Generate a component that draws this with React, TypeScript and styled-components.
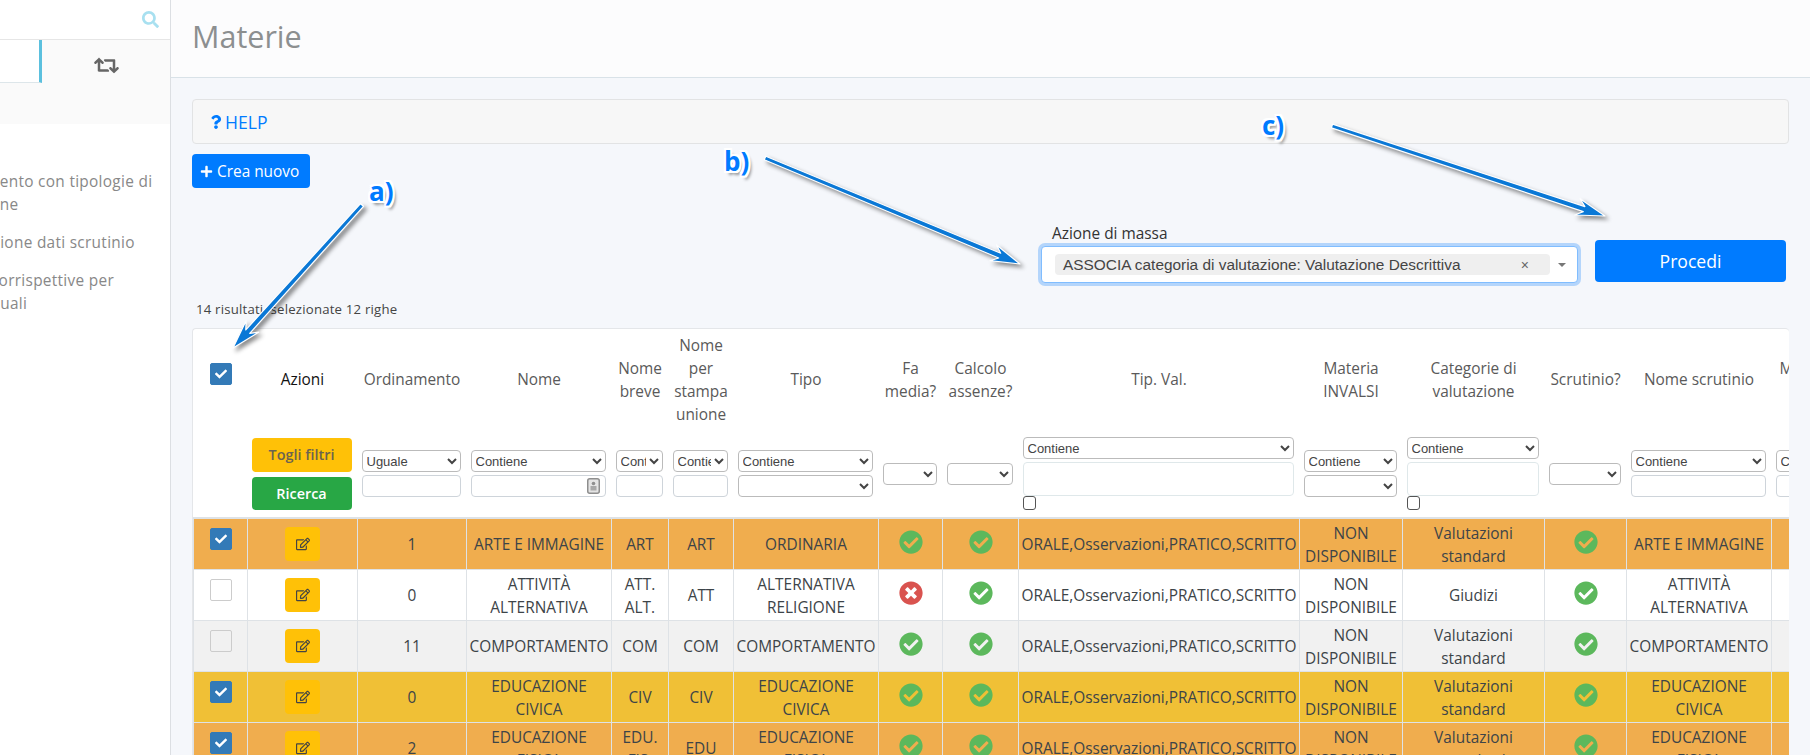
import React from 'react'
import styled, { createGlobalStyle } from 'styled-components'
import {
  FaCheck,
  FaCheckCircle,
  FaPlus,
  FaQuestion,
  FaRegEdit,
  FaRetweet,
  FaSearch,
  FaTimesCircle,
} from 'react-icons/fa'

const GlobalStyle = createGlobalStyle`
  html, body {
    margin: 0;
    padding: 0;
    background: #f5f7fb;
    font-family: "Open Sans", "Liberation Sans", sans-serif;
    font-size: 15.4px;
    color: #444;
  }
  * { box-sizing: border-box; }
`

const Page = styled.div`
  position: relative;
  display: flex;
  width: 1810px;
  height: 755px;
  overflow: hidden;
`

/* sidebar, scrolled off to the left in the reference */
const Sidebar = styled.aside`
  flex: 0 0 171px;
  background: #fff;
  border-right: 1px solid #dcdfe3;
  overflow: hidden;
`

const SearchRow = styled.div`
  height: 40px;
  padding: 0 11px 0 0;
  display: flex;
  align-items: center;
  justify-content: flex-end;
  border-bottom: 1px solid #e6e6e6;
  color: #a8e0f0;
  font-size: 17px;
`

const TabRow = styled.div`
  display: flex;
  height: 84px;
  background: #fafafa;
  align-items: flex-start;
`

const ActiveTab = styled.div`
  width: 42px;
  height: 43px;
  background: #fff;
  border-right: 3px solid #5bc0de;
  border-bottom: 1px solid #dde6ea;
`

const SwapTab = styled.div`
  flex: 1;
  height: 43px;
  display: flex;
  align-items: center;
  justify-content: center;
  color: #666;
  font-size: 25px;
  padding-top: 7px;
`

const Menu = styled.ul`
  list-style: none;
  margin: 46px 0 0 -67px;
  padding: 0;
  width: 260px;
`

const MenuItem = styled.li`
  font-size: 15.4px;
  line-height: 23px;
  letter-spacing: 0.3px;
  color: #888;
  margin-bottom: 15px;
`

const Main = styled.main`
  flex: 1;
  min-width: 0;
  background: #f5f7fb;
`

const Header = styled.header`
  height: 78px;
  padding: 0 0 6px 21px;
  display: flex;
  align-items: center;
  background: #fcfcfd;
  border-bottom: 1px solid #d9e2e8;
`

const Title = styled.h1`
  margin: 0;
  font-size: 30.5px;
  font-weight: 400;
  color: #8c8f90;
`

const Content = styled.div`
  padding: 21px 21px 0;
`

const HelpBar = styled.div`
  height: 45px;
  display: flex;
  align-items: center;
  gap: 2px;
  padding-left: 16px;
  background: #f7f7f7;
  border: 1px solid #e2e3e4;
  border-radius: 4px;
  color: #007bff;
  font-size: 17.6px;
`

const CreateButton = styled.button`
  display: flex;
  align-items: center;
  gap: 4px;
  height: 34px;
  width: 118px;
  margin-top: 10px;
  padding: 0 0 0 8px;
  border: 0;
  border-radius: 4px;
  background: #007bff;
  color: #fff;
  font: 400 15.4px "Open Sans", sans-serif;
`

const MassRow = styled.div`
  display: flex;
  justify-content: flex-end;
  align-items: flex-end;
  gap: 17px;
  margin-top: 36px;
  padding-right: 3px;
`

const MassField = styled.div`
  width: 537px;
`

const MassLabel = styled.div`
  height: 22px;
  line-height: 20px;
  padding-left: 11px;
  font-size: 15.4px;
  color: #333;
`

const MassSelect = styled.div`
  height: 37px;
  display: flex;
  align-items: center;
  padding: 0 0 0 13px;
  background: #fff;
  border: 1px solid #80bdff;
  border-radius: 4px;
  box-shadow: 0 0 0 3px #b4d5fb;
  font: 15.4px "Liberation Sans", Arial, sans-serif;
  color: #444;
`

const Chip = styled.span`
  width: 495px;
  height: 21px;
  display: flex;
  align-items: center;
  justify-content: space-between;
  padding: 0 21px 0 8px;
  background: #efefef;
  border-radius: 4px;
`

const ChipClose = styled.span`
  color: #666;
  font-size: 14px;
`

const Caret = styled.span`
  width: 0;
  height: 0;
  margin-left: 8px;
  border-left: 4px solid transparent;
  border-right: 4px solid transparent;
  border-top: 4px solid #777;
`

const GoButton = styled.button`
  width: 191px;
  height: 42px;
  margin-bottom: 1px;
  border: 0;
  border-radius: 4px;
  background: #007bff;
  color: #fff;
  font: 400 17.6px "Open Sans", sans-serif;
`

const Count = styled.div`
  margin: 18px 0 0 4px;
  height: 16px;
  line-height: 16px;
  font-size: 13.2px;
  letter-spacing: 0.2px;
  color: #444;
`

const Card = styled.div`
  margin-top: 11px;
  height: 500px;
  background: #fff;
  border: 1px solid #e4e6e9;
  border-radius: 4px 4px 0 0;
  border-right-width: 0;
  overflow: hidden;
`

const Grid = styled.table`
  table-layout: fixed;
  border-collapse: collapse;
  width: 1724px;
  font-size: 15.4px;
  line-height: 23px;
`

const HeadRow = styled.tr`
  height: 101px;
`

const Th = styled.th<{ $strong?: boolean }>`
  padding: 0 5px;
  font-weight: 500;
  text-align: center;
  vertical-align: middle;
  color: ${(p) => (p.$strong ? '#111' : '#5a5a5a')};
`

const FilterRow = styled.tr`
  height: 88px;
  border-bottom: 2px solid #dee2e6;
`

const FilterCell = styled.td`
  padding: 0 6px 0 4px;
  vertical-align: middle;
`

const Stack = styled.div<{ $gap?: number }>`
  display: flex;
  flex-direction: column;
  gap: ${(p) => p.$gap ?? 3}px;
`

const FilterButton = styled.button<{ $bg: string; $fg: string; $h: number }>`
  height: ${(p) => p.$h}px;
  border: 0;
  border-radius: 4px;
  background: ${(p) => p.$bg};
  color: ${(p) => p.$fg};
  font: 600 14.4px "Open Sans", sans-serif;
`

const FilterSelect = styled.select`
  display: block;
  width: 100%;
  height: 22px;
  padding: 0;
  background: #fff;
  border: 1px solid #bbb;
  border-radius: 4px;
  font: 13px "Liberation Sans", Arial, sans-serif;
  color: #444;
`

const InputBox = styled.div`
  position: relative;
`

const FilterInput = styled.input`
  display: block;
  width: 100%;
  height: 22px;
  padding: 0 3px;
  background: #fff;
  border: 1px solid #ced4da;
  border-radius: 4px;
`

const KeyIcon = styled.svg`
  position: absolute;
  top: 3px;
  right: 6px;
  width: 13px;
  height: 16px;
`

const MultiBox = styled.div`
  height: 34px;
  background: #fff;
  border: 1px solid #dfe8ea;
  border-radius: 4px;
`

const TinyCheck = styled.input`
  appearance: none;
  display: block;
  width: 13px;
  height: 14px;
  margin: -3px 0 0;
  background: #fff;
  border: 1px solid #555;
  border-radius: 3px;
`

const Row = styled.tr<{ $bg: string }>`
  height: 51px;
  background: ${(p) => p.$bg};
`

const Td = styled.td`
  padding: 2px 1px 0;
  border: 1px solid #dee2e6;
  text-align: center;
  vertical-align: middle;
  color: #3d4448;
`

const Box = styled.span<{ $checked?: boolean }>`
  display: flex;
  align-items: center;
  justify-content: center;
  width: 22px;
  height: 22px;
  margin: 0 auto 11px;
  border-radius: 2px;
  border: 1px solid ${(p) => (p.$checked ? '#337ab7' : '#ccc')};
  background: ${(p) => (p.$checked ? '#337ab7' : 'transparent')};
  color: #fff;
  font-size: 12px;
`

const EditButton = styled.span`
  display: flex;
  align-items: center;
  justify-content: center;
  width: 35px;
  height: 34px;
  margin: 0 auto 2px;
  border-radius: 4px;
  background: #ffc107;
  color: #444;
  font-size: 14px;
`

const Status = styled.span<{ $ok: boolean }>`
  display: flex;
  justify-content: center;
  padding-bottom: 5px;
  color: ${(p) => (p.$ok ? '#5cb85c' : '#d9534f')};
  font-size: 24px;
`

const Overlay = styled.svg`
  position: absolute;
  inset: 0;
  width: 1810px;
  height: 755px;
  pointer-events: none;
  filter: drop-shadow(3px 3px 2px rgba(0, 0, 0, 0.45));
`

const Mark = styled.span<{ $x: number; $y: number }>`
  position: absolute;
  left: ${(p) => p.$x}px;
  top: ${(p) => p.$y}px;
  font: 700 26px/30px "Open Sans", sans-serif;
  color: #007bff;
  text-shadow:
    2px 0 0 #fff, -2px 0 0 #fff, 0 2px 0 #fff, 0 -2px 0 #fff,
    2px 2px 0 #fff, -2px 2px 0 #fff, 2px -2px 0 #fff, -2px -2px 0 #fff,
    3px 4px 3px rgba(0, 0, 0, 0.4);
`

const colWidths = [54, 110, 109, 145, 57, 65, 145, 64, 76, 281, 103, 142, 82, 145, 146]

const heads = [
  '', 'Azioni', 'Ordinamento', 'Nome', 'Nome breve', 'Nome per stampa unione', 'Tipo', 'Fa media?',
  'Calcolo assenze?', 'Tip. Val.', 'Materia INVALSI', 'Categorie di valutazione', 'Scrutinio?',
  'Nome scrutinio', 'Materia principale del docente',
]

const TIP_VAL = 'ORALE,Osservazioni,PRATICO,SCRITTO'
const ORANGE = '#f0ad4e'
const YELLOW = '#f0c036'

type Subject = {
  bg: string
  checked: boolean
  order: string
  name: string
  short: string
  merge: string
  type: string
  media: boolean
  cat: string
}

const subjects: Subject[] = [
  { bg: ORANGE, checked: true, order: '1', name: 'ARTE E IMMAGINE', short: 'ART', merge: 'ART', type: 'ORDINARIA', media: true, cat: 'Valutazioni standard' },
  { bg: '#fff', checked: false, order: '0', name: 'ATTIVITÀ ALTERNATIVA', short: 'ATT. ALT.', merge: 'ATT', type: 'ALTERNATIVA RELIGIONE', media: false, cat: 'Giudizi' },
  { bg: '#f1f1f1', checked: false, order: '11', name: 'COMPORTAMENTO', short: 'COM', merge: 'COM', type: 'COMPORTAMENTO', media: true, cat: 'Valutazioni standard' },
  { bg: YELLOW, checked: true, order: '0', name: 'EDUCAZIONE CIVICA', short: 'CIV', merge: 'CIV', type: 'EDUCAZIONE CIVICA', media: true, cat: 'Valutazioni standard' },
  { bg: ORANGE, checked: true, order: '2', name: 'EDUCAZIONE FISICA', short: 'EDU. FIS.', merge: 'EDU', type: 'EDUCAZIONE FISICA', media: true, cat: 'Valutazioni standard' },
]

const Pick = ({ label }: { label?: string }) => (
  <FilterSelect defaultValue={label ?? ''}>
    <option value={label ?? ''}>{label ?? ''}</option>
  </FilterSelect>
)

const Check = ({ checked }: { checked: boolean }) => (
  <Box $checked={checked}>{checked && <FaCheck />}</Box>
)

const YesNo = ({ ok }: { ok: boolean }) => (
  <Status $ok={ok}>{ok ? <FaCheckCircle /> : <FaTimesCircle />}</Status>
)

const TextFilter = ({ label, keyIcon }: { label: string; keyIcon?: boolean }) => (
  <FilterCell>
    <Stack>
      <Pick label={label} />
      <InputBox>
        <FilterInput />
        {keyIcon && (
          <KeyIcon viewBox="0 0 13 16">
            <rect x="0.75" y="0.75" width="11.5" height="14.5" rx="2" fill="#e4e4e4" stroke="#8e8e8e" strokeWidth="1.5" />
            <circle cx="6.5" cy="5.5" r="1.8" fill="#8e8e8e" />
            <rect x="3.5" y="8" width="6" height="4.5" fill="#a8a8a8" />
          </KeyIcon>
        )}
      </InputBox>
    </Stack>
  </FilterCell>
)

const PickFilter = () => (
  <FilterCell>
    <Stack>
      <Pick label="Contiene" />
      <Pick />
    </Stack>
  </FilterCell>
)

const MultiFilter = () => (
  <FilterCell>
    <Stack>
      <Pick label="Contiene" />
      <MultiBox />
      <TinyCheck type="checkbox" />
    </Stack>
  </FilterCell>
)

const BlankFilter = () => (
  <FilterCell>
    <Pick />
  </FilterCell>
)

const Arrow = ({ x1, y1, x2, y2 }: { x1: number; y1: number; x2: number; y2: number }) => {
  const len = Math.hypot(x2 - x1, y2 - y1)
  const ux = (x2 - x1) / len
  const uy = (y2 - y1) / len
  const at = (along: number, side: number) =>
    `${(x1 + ux * along - uy * side).toFixed(1)},${(y1 + uy * along + ux * side).toFixed(1)}`
  const neck = len - 22
  const barb = len - 29
  const points = [
    at(0, -2), at(neck, -2.6), at(barb, -8.5), at(len, 0),
    at(barb, 8.5), at(neck, 2.6), at(0, 2),
  ].join(' ')
  return <polygon points={points} fill="#0a78d6" stroke="#fff" strokeWidth="1.2" strokeLinejoin="round" />
}

export default function App() {
  return (
    <Page>
      <GlobalStyle />
      <Sidebar>
        <SearchRow>
          <FaSearch />
        </SearchRow>
        <TabRow>
          <ActiveTab />
          <SwapTab>
            <FaRetweet />
          </SwapTab>
        </TabRow>
        <Menu>
          <MenuItem>Abbinamento con tipologie di<br />valutazione</MenuItem>
          <MenuItem>Importazione dati scrutinio</MenuItem>
          <MenuItem>Tabelle corrispettive per<br />le individuali</MenuItem>
        </Menu>
      </Sidebar>
      <Main>
        <Header>
          <Title>Materie</Title>
        </Header>
        <Content>
          <HelpBar>
            <FaQuestion size={14} />
            HELP
          </HelpBar>
          <CreateButton>
            <FaPlus size={13} />
            Crea nuovo
          </CreateButton>
          <MassRow>
            <MassField>
              <MassLabel>Azione di massa</MassLabel>
              <MassSelect>
                <Chip>
                  ASSOCIA categoria di valutazione: Valutazione Descrittiva
                  <ChipClose>×</ChipClose>
                </Chip>
                <Caret />
              </MassSelect>
            </MassField>
            <GoButton>Procedi</GoButton>
          </MassRow>
          <Count>14 risultati, selezionate 12 righe</Count>
          <Card>
            <Grid>
              <colgroup>
                {colWidths.map((w, i) => (
                  <col key={i} width={w} />
                ))}
              </colgroup>
              <thead>
                <HeadRow>
                  {heads.map((h, i) => (
                    <Th key={i} $strong={i === 1}>
                      {i === 0 ? <Check checked /> : h}
                    </Th>
                  ))}
                </HeadRow>
                <FilterRow>
                  <FilterCell />
                  <FilterCell>
                    <Stack $gap={5}>
                      <FilterButton $bg="#ffc107" $fg="#6b6350" $h={34}>Togli filtri</FilterButton>
                      <FilterButton $bg="#28a745" $fg="#fff" $h={33}>Ricerca</FilterButton>
                    </Stack>
                  </FilterCell>
                  <TextFilter label="Uguale" />
                  <TextFilter label="Contiene" keyIcon />
                  <TextFilter label="Contiene" />
                  <TextFilter label="Contiene" />
                  <PickFilter />
                  <BlankFilter />
                  <BlankFilter />
                  <MultiFilter />
                  <PickFilter />
                  <MultiFilter />
                  <BlankFilter />
                  <TextFilter label="Contiene" />
                  <TextFilter label="Contiene" />
                </FilterRow>
              </thead>
              <tbody>
                {subjects.map((s) => (
                  <Row key={s.name} $bg={s.bg}>
                    <Td><Check checked={s.checked} /></Td>
                    <Td><EditButton><FaRegEdit /></EditButton></Td>
                    <Td>{s.order}</Td>
                    <Td>{s.name}</Td>
                    <Td>{s.short}</Td>
                    <Td>{s.merge}</Td>
                    <Td>{s.type}</Td>
                    <Td><YesNo ok={s.media} /></Td>
                    <Td><YesNo ok /></Td>
                    <Td>{TIP_VAL}</Td>
                    <Td>NON DISPONIBILE</Td>
                    <Td>{s.cat}</Td>
                    <Td><YesNo ok /></Td>
                    <Td>{s.name}</Td>
                    <Td />
                  </Row>
                ))}
              </tbody>
            </Grid>
          </Card>
        </Content>
      </Main>
      <Overlay viewBox="0 0 1810 755">
        <Arrow x1={362} y1={205} x2={233} y2={348} />
        <Arrow x1={765} y1={158} x2={1020} y2={264} />
        <Arrow x1={1332} y1={126} x2={1605} y2={216} />
      </Overlay>
      <Mark $x={369} $y={176}>a)</Mark>
      <Mark $x={724} $y={146}>b)</Mark>
      <Mark $x={1262} $y={110}>c)</Mark>
    </Page>
  )
}
